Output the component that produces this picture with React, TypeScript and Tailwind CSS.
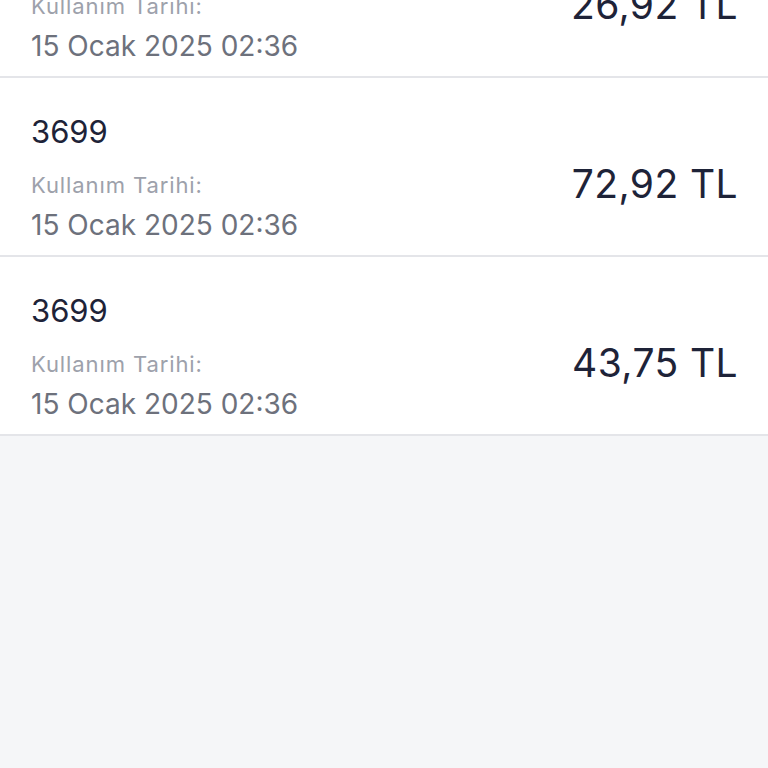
import React from "react";

const items = [
  { code: "3699", amount: "26,92 TL" },
  { code: "3699", amount: "72,92 TL" },
  { code: "3699", amount: "43,75 TL" },
];

export default function App() {
  return (
    <div
      className="w-[768px] h-[768px] overflow-hidden bg-[#f5f6f8]"
      style={{ fontFamily: "Inter, 'Noto Sans', sans-serif" }}
    >
      <div className="-mt-[101px]">
        {items.map((it, i) => (
          <div
            key={i}
            className="h-[179px] bg-white border-b-2 border-[#e4e5e9] flex items-start justify-between pl-[31px] pr-[30px]"
          >
            <div className="flex flex-col pt-[34px]">
              <div className="text-[31px] leading-[40px] text-[#1e2338]">{it.code}</div>
              <div className="text-[22px] leading-[30px] mt-[18px] tracking-[0.9px] text-[#9da1ab]">Kullanım Tarihi:</div>
              <div className="text-[28px] leading-[38px] mt-[6px] text-[#6d717c]">15 Ocak 2025 02:36</div>
            </div>
            <div className="text-[39px] leading-[46px] tracking-[0.4px] text-[#1e2338] mt-[83px]">{it.amount}</div>
          </div>
        ))}
      </div>
    </div>
  );
}
